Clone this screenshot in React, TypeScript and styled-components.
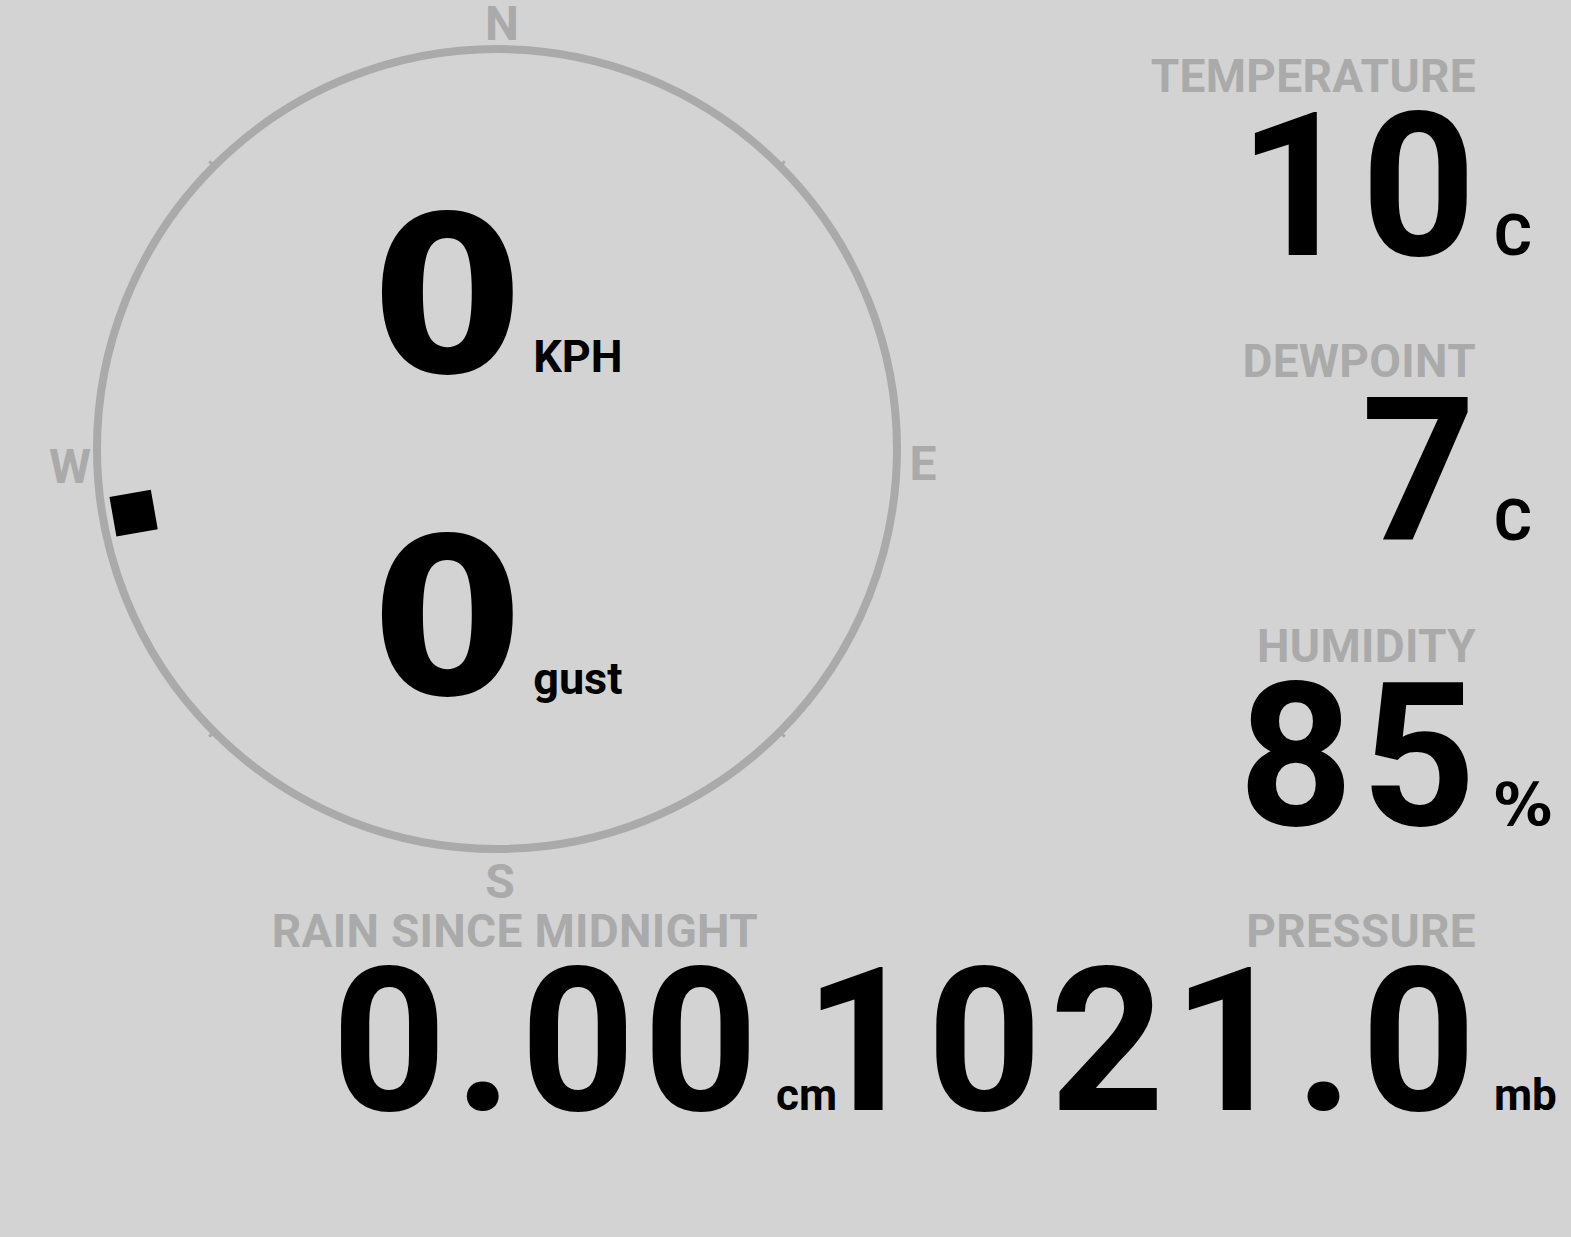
import styled, { createGlobalStyle } from "styled-components";

const GlobalStyle = createGlobalStyle`
  html, body {
    margin: 0;
    padding: 0;
    background: #d3d3d3;
  }
  body {
    font-family: Roboto, "Liberation Sans", sans-serif;
  }
`;

type Reading = {
  label: string;
  value: string;
  unit: string;
  unitSize: number;
  wideUnit?: boolean;
};

const sideReadings: Reading[] = [
  { label: "TEMPERATURE", value: "10", unit: "C", unitSize: 58 },
  { label: "DEWPOINT", value: "7", unit: "C", unitSize: 58 },
  { label: "HUMIDITY", value: "85", unit: "%", unitSize: 58, wideUnit: true },
  { label: "PRESSURE", value: "1021.0", unit: "mb", unitSize: 44 },
];

const rain: Reading = {
  label: "RAIN SINCE MIDNIGHT",
  value: "0.00",
  unit: "cm",
  unitSize: 44,
};

// compass geometry, in page pixels
const CX = 497;
const CY = 449;
const R = 400;
const windDir = 260;

function Stat({ label, value, unit, unitSize, wideUnit }: Reading) {
  return (
    <StatBlock>
      <Label>{label}</Label>
      <Value>{value}</Value>
      <Unit $size={unitSize} $wide={!!wideUnit}>
        {unit}
      </Unit>
    </StatBlock>
  );
}

function CompassDial() {
  const ticks = [45, 135, 225, 315].map((deg) => {
    const a = (deg * Math.PI) / 180;
    return {
      x1: CX + Math.sin(a) * (R - 2),
      y1: CY - Math.cos(a) * (R - 2),
      x2: CX + Math.sin(a) * (R + 7),
      y2: CY - Math.cos(a) * (R + 7),
    };
  });
  const a = (windDir * Math.PI) / 180;
  const mx = CX + Math.sin(a) * 369;
  const my = CY - Math.cos(a) * 369;

  return (
    <Dial viewBox="0 0 950 900" width={950} height={900}>
      <circle cx={CX} cy={CY} r={R} fill="none" stroke="#aaa" strokeWidth={8} />
      {ticks.map((t, i) => (
        <line key={i} {...t} stroke="#aaa" strokeWidth={3} />
      ))}
      <g fill="#aaa" fontSize={48} fontWeight={700} textAnchor="middle" dominantBaseline="central">
        <text x={502} y={23}>N</text>
        <text x={500} y={881}>S</text>
        <text x={70} y={466}>W</text>
        <text x={923} y={463}>E</text>
      </g>
      <rect
        x={mx - 21}
        y={my - 20}
        width={42}
        height={40}
        fill="#000"
        transform={`rotate(${windDir - 270} ${mx} ${my})`}
      />
    </Dial>
  );
}

export default function App() {
  return (
    <>
      <GlobalStyle />
      <Page>
        <LeftColumn>
          <Compass>
            <CompassDial />
            <WindReadings>
              <WindRow>
                <WindValue>0</WindValue>
                <WindUnit>KPH</WindUnit>
              </WindRow>
              <WindRow>
                <WindValue>0</WindValue>
                <WindUnit>gust</WindUnit>
              </WindRow>
            </WindReadings>
          </Compass>
          <Stat {...rain} />
        </LeftColumn>
        <RightColumn>
          {sideReadings.map((r) => (
            <Stat key={r.label} {...r} />
          ))}
        </RightColumn>
      </Page>
    </>
  );
}

const Page = styled.main`
  width: 1571px;
  height: 1237px;
  display: grid;
  grid-template-columns: 950px minmax(0, 1fr);
  overflow: hidden;
`;

const LeftColumn = styled.section`
  display: flex;
  flex-direction: column;
  align-items: flex-end;
  padding-right: 99px;
  min-width: 0;
`;

const RightColumn = styled.section`
  display: flex;
  flex-direction: column;
  align-items: flex-end;
  gap: 71px;
  padding: 53px 2px 0 0;
  min-width: 0;
`;

const Compass = styled.div`
  position: relative;
  width: 950px;
  height: 900px;
  margin-right: -99px;
  flex-shrink: 0;
  margin-bottom: 8px;
`;

const Dial = styled.svg`
  position: absolute;
  inset: 0;
  font-family: Roboto, "Liberation Sans", sans-serif;
`;

const WindReadings = styled.div`
  position: relative;
  display: flex;
  flex-direction: column;
  align-items: center;
  gap: 144px;
  padding: 208px 0 0 44px;
`;

const WindRow = styled.div`
  display: flex;
  align-items: baseline;
  gap: 10px;
`;

const WindValue = styled.span`
  font-family: "DejaVu Sans", Roboto, sans-serif;
  font-size: 218px;
  line-height: 178px;
  font-weight: 700;
  color: #000;
`;

const WindUnit = styled.span`
  font-size: 45px;
  font-weight: 700;
  color: #000;
`;

const StatBlock = styled.div`
  display: grid;
  grid-template-columns: auto 75px;
  column-gap: 18px;
  row-gap: 8px;
  align-items: baseline;
  flex-shrink: 0;
`;

const Label = styled.div`
  grid-column: 1;
  justify-self: end;
  font-size: 46px;
  line-height: 46px;
  font-weight: 700;
  letter-spacing: 0.3px;
  color: #aaa;
  white-space: nowrap;
`;

const Value = styled.div`
  grid-column: 1;
  justify-self: end;
  font-size: 200px;
  line-height: 160px;
  font-weight: 700;
  letter-spacing: 8px;
  margin-right: -8px;
  color: #000;
  white-space: nowrap;
`;

const Unit = styled.div<{ $size: number; $wide: boolean }>`
  grid-column: 2;
  font-family: ${(p) => (p.$wide ? '"DejaVu Sans", Roboto, sans-serif' : "inherit")};
  font-size: ${(p) => p.$size}px;
  line-height: 1;
  font-weight: 700;
  color: #000;
  white-space: nowrap;
`;
